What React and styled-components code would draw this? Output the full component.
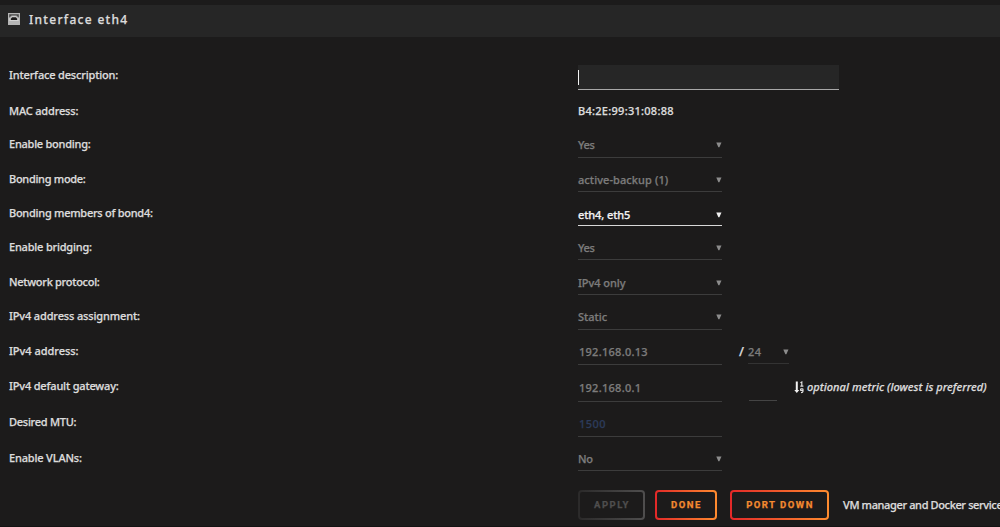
import styled, { createGlobalStyle } from "styled-components"

const rows = [
    { label: "Interface description:", track: -0.17, height: 36, field: 25, type: "text" },
    { label: "MAC address:", track: -0.17, height: 33, type: "plain", value: "B4:2E:99:31:08:88", spacing: 0.27 },
    { label: "Enable bonding:", track: -0.25, height: 35, field: 24, type: "select", value: "Yes", spacing: -0.3 },
    { label: "Bonding mode:", track: -0.3, height: 34, field: 23, type: "select", value: "active-backup (1)", spacing: 0.08 },
    { label: "Bonding members of bond4:", track: -0.27, height: 34, field: 23, type: "select", value: "eth4, eth5", spacing: -0.1, active: true },
    { label: "Enable bridging:", track: -0.2, height: 35, field: 23, type: "select", value: "Yes", spacing: -0.3 },
    { label: "Network protocol:", track: -0.28, height: 34, field: 23, type: "select", value: "IPv4 only", spacing: -0.05 },
    { label: "IPv4 address assignment:", track: -0.14, height: 35, field: 24, type: "select", value: "Static" },
    { label: "IPv4 address:", track: -0.03, height: 35, field: 24, type: "input", value: "192.168.0.13", spacing: 0.27 },
    { label: "IPv4 default gateway:", track: -0.17, height: 36, field: 26, type: "input", value: "192.168.0.1", spacing: 0.27 },
    { label: "Desired MTU:", track: -0.27, height: 36, field: 25, type: "input", value: "1500", spacing: 0.45, color: "#2c3b5a" },
    { label: "Enable VLANs:", track: -0.17, height: 42, field: 23, type: "select", value: "No", spacing: -0.3 },
]

function PortIcon() {
    return (
        <svg width="12" height="12" viewBox="0 0 12 12">
            <rect width="12" height="12" fill="#b5b5b5" />
            <path d="M1.2 1.2h9.6v3.6L8.4 2.6H3.6L1.2 4.8z" fill="#4a4a4a" />
            <path d="M1.3 8V5.3h1.6L4.3 3.2h3.4l1.4 2.1h1.6V8z" fill="#d4d4d4" />
            <path d="M2.8 7V5.7L4.2 4.2h3.6l1.4 1.5V7z" fill="#1c1b1b" />
        </svg>
    )
}

function SortIcon() {
    return (
        <svg width="11" height="13" viewBox="0 0 11 13">
            <path d="M1.8.5h2v8.4h1.5L2.8 12 .3 8.9h1.5z" fill="#f2f2f2" />
            <path
                d="M6.4 1.8 7.8 1v4M6.3 5.1h3.1M8.9 9.5H7.2a.6.6 0 0 1-.6-.6v-.5c0-.4.3-.6.6-.6h1.1c.4 0 .7.3.7.7v1.7c0 .9-.7 1.4-2 1.4"
                fill="none"
                stroke="#e0e0e0"
                strokeWidth="1.2"
            />
        </svg>
    )
}

function Arrow({ active }) {
    return (
        <svg width="6" height="6" viewBox="0 0 6 6">
            <path d="M.3.5h5.2L3.4 5.3h-1z" fill={active ? "#f2f2f2" : "#8c8c8c"} />
        </svg>
    )
}

function Field({ row }) {
    if (row.type === "text") {
        return (
            <TextInput $height={row.field}>
                <Caret />
            </TextInput>
        )
    }
    if (row.type === "plain") {
        return <Value $spacing={row.spacing}>{row.value}</Value>
    }
    return (
        <Control $height={row.field} $active={row.active} $input={row.type === "input"} $color={row.color}>
            <Value $spacing={row.spacing}>{row.value}</Value>
            {row.type === "select" && <Arrow active={row.active} />}
        </Control>
    )
}

function App() {
    return (
        <Page>
            <GlobalStyle />
            <TitleBar>
                <PortIcon />
                <Title>Interface eth4</Title>
            </TitleBar>
            <Form>
                {rows.map((row) => (
                    <Row key={row.label} $height={row.height}>
                        <Label $track={row.track}>{row.label}</Label>
                        <Field row={row} />
                        {row.label === "IPv4 address:" && (
                            <>
                                <Slash>/</Slash>
                                <Mask>
                                    <Value $spacing={0.4}>24</Value>
                                    <Arrow />
                                </Mask>
                            </>
                        )}
                        {row.label === "IPv4 default gateway:" && (
                            <>
                                <Metric />
                                <Hint>
                                    <SortIcon />
                                    <em>optional metric (lowest is preferred)</em>
                                </Hint>
                            </>
                        )}
                    </Row>
                ))}
                <Actions>
                    <Button $width={67} disabled>Apply</Button>
                    <Button $width={62}>Done</Button>
                    <Button $width={99}>Port down</Button>
                    <Note>VM manager and Docker service</Note>
                </Actions>
            </Form>
        </Page>
    )
}

const GlobalStyle = createGlobalStyle`
    * {
        box-sizing: border-box;
    }
    body {
        margin: 0;
        background: #1c1b1b;
        overflow: hidden;
    }
`

const Page = styled.div`
    width: 1000px;
    height: 527px;
    overflow: hidden;
    background: #1c1b1b;
    border-bottom: 1px solid #141313;
    padding-top: 5px;
    color: #dcdcdc;
    font: 500 11px/20px "Noto Sans", "Open Sans", sans-serif;
    -webkit-text-stroke: 0.25px currentColor;
    white-space: nowrap;
`

const TitleBar = styled.header`
    display: flex;
    gap: 9px;
    height: 32px;
    padding: 8px 8px 0;
    background: #262626;
`

const Title = styled.h1`
    margin: -3px 0 0;
    font-size: 12px;
    line-height: 20px;
    font-weight: 500;
    letter-spacing: 1.3px;
`

const Form = styled.main`
    padding: 28px 0 0 9px;
`

const Row = styled.div`
    display: flex;
    align-items: flex-start;
    height: ${({ $height }) => $height}px;
`

const Label = styled.label`
    width: 569px;
    flex: none;
    letter-spacing: ${({ $track }) => $track}px;
`

const TextInput = styled.div`
    width: 261px;
    height: ${({ $height }) => $height}px;
    padding-top: 5px;
    background: #262626;
    border-bottom: 1px solid #a8a8a8;
`

const Caret = styled.div`
    width: 1px;
    height: 15px;
    background: #f2f2f2;
`

const Control = styled.div`
    display: flex;
    align-items: center;
    justify-content: space-between;
    width: 144px;
    height: ${({ $height }) => $height}px;
    padding: ${({ $active }) => ($active ? 1 : 0)}px 0 ${({ $active }) => ($active ? 0 : 1)}px
        ${({ $input }) => ($input ? 1 : 0)}px;
    color: ${({ $active, $color }) => $color || ($active ? "#f2f2f2" : "#7c7c7c")};
    border-bottom: 1px solid ${({ $active }) => ($active ? "#d8d8d8" : "#3c3c3c")};
`

const Value = styled.span`
    letter-spacing: ${({ $spacing }) => $spacing || 0}px;
`

const Slash = styled.span`
    width: 9px;
    margin-left: 17px;
    font-size: 13px;
`

const Mask = styled.div`
    display: flex;
    align-items: center;
    justify-content: space-between;
    width: 41px;
    height: 23px;
    color: #7c7c7c;
    border-bottom: 1px solid #333;
`

const Metric = styled.div`
    width: 28px;
    height: 25px;
    margin-left: 27px;
    border-bottom: 1px solid #444;
`

const Hint = styled.div`
    display: flex;
    align-items: center;
    gap: 2px;
    height: 22px;
    margin-left: 17px;
    letter-spacing: 0.06px;
`

const Actions = styled.div`
    display: flex;
    align-items: center;
    height: 30px;
    padding-left: 569px;
`

const Button = styled.button`
    width: ${({ $width }) => $width}px;
    height: 30px;
    flex: none;
    margin-right: ${({ $width }) => ($width === 62 ? 13 : 10)}px;
    padding: 0 0 0 1px;
    border: 2px solid transparent;
    border-radius: 4px;
    background:
        linear-gradient(#1c1b1b, #1c1b1b) padding-box,
        linear-gradient(90deg, ${({ disabled }) => (disabled ? "#2b2a2a, #4f4e4e" : "#e22828, #ff8c2f")}) border-box;
    color: ${({ disabled }) => (disabled ? "#4f4e4e" : "#f48a30")};
    font: 700 9.5px/20px Roboto, sans-serif;
    letter-spacing: 1.5px;
    text-transform: uppercase;
`

const Note = styled.span`
    margin-left: 4px;
    letter-spacing: -0.37px;
`

export default App
